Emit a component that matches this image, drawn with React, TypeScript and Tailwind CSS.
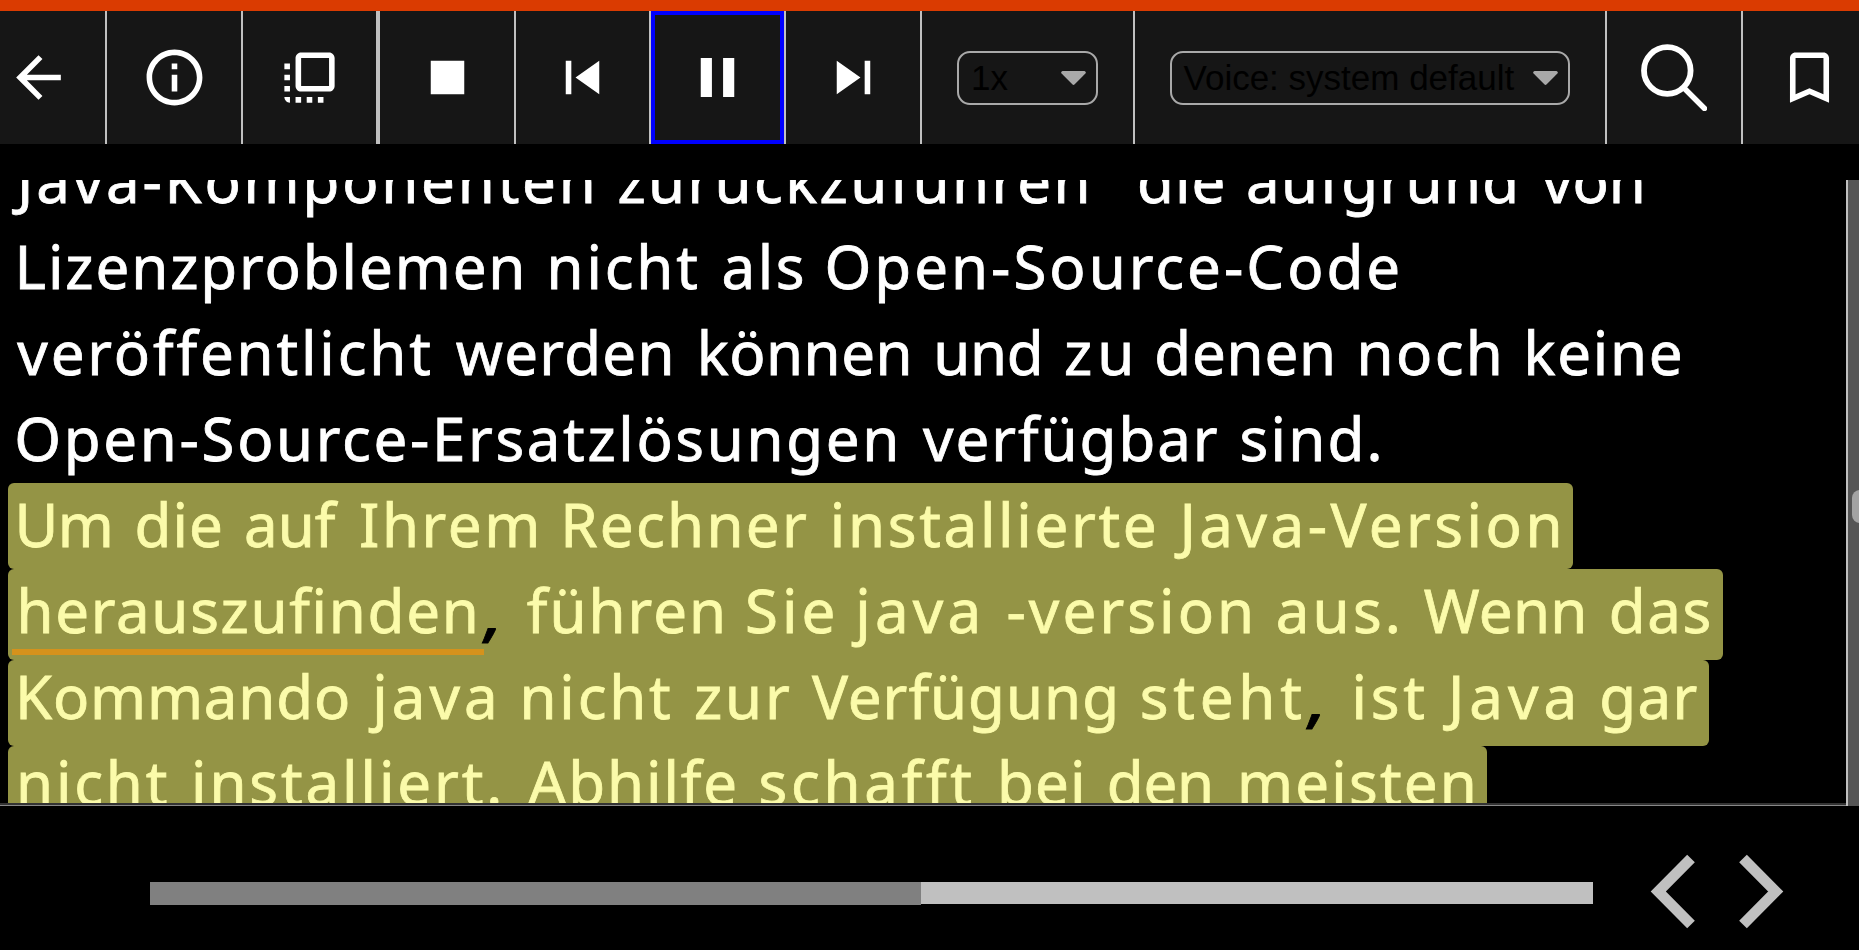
import type { ReactNode } from "react";

// [text, start x, letter spacing]
type Word = [string, number, number];

const plainLines: Word[][] = [
  [["Java-Komponenten", 17, 2.8], ["zurückzuführen", 617.5, 2.35], [",", 1092, 0], ["die", 1137, 1], ["aufgrund", 1246, 1.3], ["von", 1542, 0]],
  [["Lizenzproblemen", 14.6, 1.9], ["nicht", 546.6, 2.8], ["als", 721.6, 2.5], ["Open-Source-Code", 824.4, 3]],
  [["veröffentlicht", 17.3, 2.85], ["werden", 455.7, 1.3], ["können", 696.7, 0.5], ["und", 933.3, -0.3], ["zu", 1064, 5], ["denen", 1154.4, 0.75], ["noch", 1356.5, 2.4], ["keine", 1523.5, 1.7]],
  [["Open-Source-Ersatzlösungen", 14.3, 2.65], ["verfügbar", 923, 1.95], ["sind.", 1239.6, 2.2]],
];

const line5: Word[] = [["Um", 14.4, -0.5], ["die", 134.5, 1.1], ["auf", 244, 0], ["Ihrem", 359, 2.6], ["Rechner", 560.2, 2.3], ["installierte", 829.8, 2.7], ["Java-Version", 1179.5, 3.5]];
const line6: Word[] = [["herauszufinden", 16.4, 1.7], [",", 485, 0], ["führen", 526.8, 2], ["Sie", 745, 4], ["java", 855.3, 4.2], ["-version", 1006.5, 3.1], ["aus.", 1275.8, 3.2], ["Wenn", 1423.9, 0.3], ["das", 1608.7, 1.7]];
const line7: Word[] = [["Kommando", 15, 0.8], ["java", 372.3, 4], ["nicht", 519.5, 2.8], ["zur", 694, 2.9], ["Verfügung", 812, 1], ["steht", 1139.7, 4.8], [",", 1309, 0], ["ist", 1351.5, 3.8], ["Java", 1448, 5], ["gar", 1599.4, 1.3]];
const line8: Word[] = [["nicht", 16, 2.8], ["installiert.", 191, 2.9], ["Abhilfe", 528, 1.9], ["schafft", 758.5, 3.7], ["bei", 996.9, 1.2], ["den", 1106.8, -0.3], ["meisten", 1237, 2.2]];

function Words({ words, origin = 0 }: { words: Word[]; origin?: number }) {
  return (
    <div className="flex whitespace-pre" style={{ paddingLeft: words[0][1] - origin }}>
      {words.map(([text, x, spacing], i) => (
        <span
          key={i}
          className={text === "," ? "shrink-0 translate-y-[2px] font-semibold text-black italic" : "shrink-0"}
          style={{ width: i < words.length - 1 ? words[i + 1][1] - x : undefined, letterSpacing: spacing }}
        >
          {text + (words[i + 1]?.[0] === "," ? "" : " ")}
        </span>
      ))}
    </div>
  );
}

function Cell({ className, children }: { className: string; children: ReactNode }) {
  return <div className={`flex h-full shrink-0 items-center justify-center border-[#c0c0c0] ${className}`}>{children}</div>;
}

function Icon({ d }: { d: string }) {
  return (
    <svg viewBox="0 0 24 24" className="size-[67px] shrink-0 fill-white">
      <path d={d} />
    </svg>
  );
}

function Select({ label, className }: { label: string; className: string }) {
  return (
    <div className={`flex h-[54px] items-center justify-between rounded-[13px] border-2 border-[#a9a9a9] pr-[10px] pl-[12px] ${className}`}>
      <span className="text-[35px] leading-[50px] whitespace-nowrap text-black">{label}</span>
      <svg viewBox="0 0 25 14" className="h-[14px] w-[25px] shrink-0 fill-[#a9a9a9]">
        <path d="M1.5 0h22q2.200 1 .9 2.600L13.700 13.300q-1.200 1.200-2.400 0L.6 2.600Q-.7 1 1.500 0z" />
      </svg>
    </div>
  );
}

export default function App() {
  return (
    <div className="flex h-[950px] w-[1859px] flex-col overflow-hidden bg-black font-['Liberation_Sans',sans-serif]">
      <div className="h-[11px] shrink-0 bg-[#da3b01]" />
      <header className="flex h-[133px] shrink-0 bg-[#161616]">
        <Cell className="w-[107px] border-r-2 pr-[28px]">
          <Icon d="M20 11H7.830l5.590-5.590L12 4l-8 8 8 8 1.410-1.410L7.830 13H20z" />
        </Cell>
        <Cell className="w-[136px] border-r-2">
          <Icon d="M11 7h2v2h-2zm0 4h2v6h-2zm1-9C6.480 2 2 6.480 2 12s4.480 10 10 10 10-4.480 10-10S17.520 2 12 2zm0 18c-4.410 0-8-3.590-8-8s3.590-8 8-8 8 3.590 8 8-3.590 8-8 8z" />
        </Cell>
        <Cell className="w-[137px] border-r-4">
          <Icon d="M3 13h2v-2H3v2zm0 4h2v-2H3v2zm2 4v-2H3c0 1.100.89 2 2 2zM3 9h2V7H3v2zm12 12h2v-2h-2v2zm4-18H9c-1.110 0-2 .9-2 2v10c0 1.100.89 2 2 2h10c1.100 0 2-.9 2-2V5c0-1.100-.9-2-2-2zm0 12H9V5h10v10zm-8 6h2v-2h-2v2zm-4 0h2v-2H7v2z" />
        </Cell>
        <Cell className="w-[136px] border-r-2">
          <Icon d="M6 6h12v12H6z" />
        </Cell>
        <Cell className="w-[135px] border-r-2">
          <Icon d="M6 6h2v12H6zm3.500 6 8.500 6V6z" />
        </Cell>
        <Cell className="w-[135px] border-r-2">
          <div className="flex size-full items-center justify-center border-4 border-[#0000ff]">
            <Icon d="M6 19h4V5H6v14zm8-14v14h4V5h-4z" />
          </div>
        </Cell>
        <Cell className="w-[136px] border-r-2">
          <Icon d="M6 18l8.500-6L6 6v12zM16 6v12h2V6h-2z" />
        </Cell>
        <Cell className="w-[213px] border-r-2">
          <Select label="1x" className="w-[141px]" />
        </Cell>
        <Cell className="w-[472px] border-r-2 pr-px">
          <Select label="Voice: system default" className="w-[400px]" />
        </Cell>
        <Cell className="w-[136px] border-r-2">
          <svg viewBox="0 0 66 67" className="h-[67px] w-[66px] fill-none stroke-white">
            <circle cx="26.300" cy="26.500" r="23.300" strokeWidth="5.800" />
            <path d="M43 44l20.500 20.500" strokeWidth="5.400" strokeLinecap="round" />
          </svg>
        </Cell>
        <Cell className="w-[116px] pl-[17px]">
          <Icon d="M17 3H7c-1.100 0-1.990.9-1.990 2L5 21l7-3 7 3V5c0-1.100-.9-2-2-2zm0 15-5-2.180L7 18V5h10v13z" />
        </Cell>
      </header>

      <main className="mt-[36px] flex h-[626px] shrink-0">
        <div className="flex w-[1846px] flex-col">
          <div className="h-[623px] overflow-hidden font-['Noto_Sans',sans-serif] text-[60px] leading-[82px] text-white [-webkit-text-stroke:0.8px]">
            <div className="-mt-[41px]">
              {plainLines.map((words, i) => (
                <div key={i} className="h-[86px]">
                  <Words words={words} />
                </div>
              ))}
              <div className="ml-[8px] text-[#fbfbaa]">
                <div className="h-[86px] w-[1565px] rounded-[6px] bg-[#949445]">
                  <Words words={line5} origin={8} />
                </div>
                <div className="relative h-[91px] w-[1715px] rounded-[6px] bg-[#949445]">
                  <Words words={line6} origin={8} />
                  <div className="absolute top-[80px] left-[4px] h-[6px] w-[472px] bg-[#d5921c]" />
                </div>
                <div className="h-[86px] w-[1701px] rounded-[6px] bg-[#949445] leading-[72px]">
                  <Words words={line7} origin={8} />
                </div>
                <div className="h-[86px] w-[1479px] rounded-[6px] bg-[#949445] leading-[72px]">
                  <Words words={line8} origin={8} />
                </div>
              </div>
            </div>
          </div>
          <div className="h-[3px] border-b border-[#888888] bg-[#333333]" />
        </div>
        <div className="w-[13px] overflow-hidden border-l-2 border-[#c0c0c0] bg-[#555555] pt-[310px] pl-[4px]">
          <div className="h-[33px] w-[16px] rounded-[8px] bg-[#a3a3a3]" />
        </div>
      </main>

      <footer className="flex h-[144px] shrink-0 pt-[48px] pl-[150px]">
        <div className="mt-[28px] h-[23px] w-[771px] bg-[#808080]" />
        <div className="mt-[28px] h-[22px] w-[672px] bg-[#c0c0c0]" />
        <svg viewBox="0 0 45 75" className="ml-[57px] h-[75px] w-[45px] fill-none stroke-[#c0c0c0]">
          <path d="M41 4.500L8.300 37.500L41 70.500" strokeWidth="10.800" />
        </svg>
        <svg viewBox="0 0 45 75" className="ml-[44px] h-[75px] w-[45px] fill-none stroke-[#c0c0c0]">
          <path d="M4 4.500L36.700 37.500L4 70.500" strokeWidth="10.800" />
        </svg>
      </footer>
    </div>
  );
}
